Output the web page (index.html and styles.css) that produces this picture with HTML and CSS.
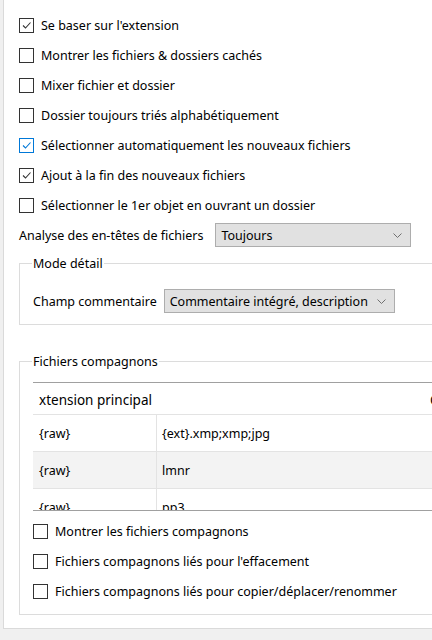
FILE: index.html
```html
<!DOCTYPE html>
<html lang="fr">
<head>
<meta charset="utf-8">
<link rel="stylesheet" href="styles.css">
</head>
<body>
<div class="panel">
  <div class="checks">
    <label class="chk"><span class="box checked"><svg viewBox="0 0 13 13"><polyline points="3,6.5 5.5,9 10.5,3.5"/></svg></span>Se baser sur l'extension</label>
    <label class="chk"><span class="box"></span>Montrer les fichiers &amp; dossiers cachés</label>
    <label class="chk"><span class="box"></span>Mixer fichier et dossier</label>
    <label class="chk"><span class="box"></span>Dossier toujours triés alphabétiquement</label>
    <label class="chk"><span class="box checked focus"><svg viewBox="0 0 13 13"><polyline points="3,6.5 5.5,9 10.5,3.5"/></svg></span>Sélectionner automatiquement les nouveaux fichiers</label>
    <label class="chk"><span class="box checked"><svg viewBox="0 0 13 13"><polyline points="3,6.5 5.5,9 10.5,3.5"/></svg></span>Ajout à la fin des nouveaux fichiers</label>
    <label class="chk"><span class="box"></span>Sélectionner le 1er objet en ouvrant un dossier</label>
  </div>
  <div class="field-row analyse">
    <span class="lbl">Analyse des en-têtes de fichiers</span>
    <div class="select sel-analyse"><span>Toujours</span><svg class="chev" viewBox="0 0 9 5"><polyline points="0.5,0.5 4.5,4.5 8.5,0.5"/></svg></div>
  </div>
  <fieldset class="group mode">
    <legend>Mode détail</legend>
    <div class="field-row champ">
      <span class="lbl">Champ commentaire</span>
      <div class="select sel-champ"><span>Commentaire intégré, description</span><svg class="chev" viewBox="0 0 9 5"><polyline points="0.5,0.5 4.5,4.5 8.5,0.5"/></svg></div>
    </div>
  </fieldset>
  <fieldset class="group comp">
    <legend>Fichiers compagnons</legend>
    <div class="table">
      <div class="trow head"><div class="c1">xtension principal</div><div class="c2"><span class="cut">C</span></div></div>
      <div class="trow"><div class="c1">{raw}</div><div class="c2">{ext}.xmp;xmp;jpg</div></div>
      <div class="trow alt"><div class="c1">{raw}</div><div class="c2">lmnr</div></div>
      <div class="trow last"><div class="c1">{raw}</div><div class="c2">pp3</div></div>
    </div>
    <div class="checks sub">
      <label class="chk"><span class="box"></span>Montrer les fichiers compagnons</label>
      <label class="chk"><span class="box"></span>Fichiers compagnons liés pour l'effacement</label>
      <label class="chk"><span class="box"></span>Fichiers compagnons liés pour copier/déplacer/renommer</label>
    </div>
  </fieldset>
</div>
</body>
</html>
```
FILE: styles.css
```css
* { box-sizing: border-box; }
html, body { margin: 0; padding: 0; }
body {
  background: #f0f0f0;
  width: 432px;
  height: 640px;
  overflow: hidden;
  font-family: "Noto Sans", "Open Sans", sans-serif;
  font-size: 12.5px;
  color: #000;
}
.panel {
  margin-left: 3px;
  height: 629px;
  background: #fff;
  border-left: 1px solid #dadada;
  border-bottom: 1px solid #dadada;
  padding: 10px 0 0 15px;
  overflow: hidden;
}
.checks { display: flex; flex-direction: column; }
.chk {
  display: flex;
  align-items: center;
  height: 30px;
  white-space: nowrap;
}
.box {
  width: 15px;
  height: 15px;
  border: 1px solid #333;
  background: #fff;
  margin-right: 7px;
  flex: none;
  display: flex;
}
.box svg { width: 13px; height: 13px; }
.box polyline { fill: none; stroke: #333; stroke-width: 1.1; }
.box.focus { border-color: #0078d7; }
.box.focus polyline { stroke: #0078d7; }
.field-row { display: flex; align-items: center; white-space: nowrap; }
.analyse { height: 30px; }
.lbl { margin-right: 7px; }
.analyse .lbl { margin-right: 12px; }
.select {
  display: flex;
  align-items: center;
  justify-content: space-between;
  height: 24px;
  background: #e1e1e1;
  border: 1px solid #adadad;
  padding: 0 8px 0 5px;
}
.sel-analyse { width: 196px; }
.sel-champ { width: 231px; }
.chev { width: 9px; height: 5px; }
.chev polyline { fill: none; stroke: #707070; stroke-width: 1; }
.group {
  margin: 0 -30px 0 0;
  border: 1px solid #dcdcdc;
  padding: 0 0 0 13px;
  min-width: 0;
}
.group legend { padding: 0 1px; margin-left: -1px; }
.mode { margin-top: 5px; height: 70px; }
.champ { height: 38px; margin-top: 10px; }
.comp { margin-top: 28px; height: 262px; }
.table {
  margin-top: 12px;
  border-top: 1px solid #a0a0a0;
  border-bottom: 1px solid #a0a0a0;
  height: 129px;
  overflow: hidden;
}
.trow { display: flex; height: 37px; align-items: stretch; }
.trow.head { height: 31px; font-size: 13.5px; padding-top: 2px; }
.trow .c1 {
  width: 124px;
  padding-left: 6px;
  display: flex; align-items: center;
  border-right: 1px solid #e3e3e3;
  white-space: nowrap;
}
.trow .c2 {
  flex: 1;
  padding-left: 5px;
  display: flex; align-items: center;
  white-space: nowrap;
  overflow: hidden;
}
.trow.head .c1 { border-right-color: #fff; }
.trow.head .c2 { padding-left: 273px; }
.trow:not(.head) { border-top: 1px solid #e3e3e3; }
.trow.alt { background: #f3f3f3; }
.sub { margin-top: 5px; }
```
